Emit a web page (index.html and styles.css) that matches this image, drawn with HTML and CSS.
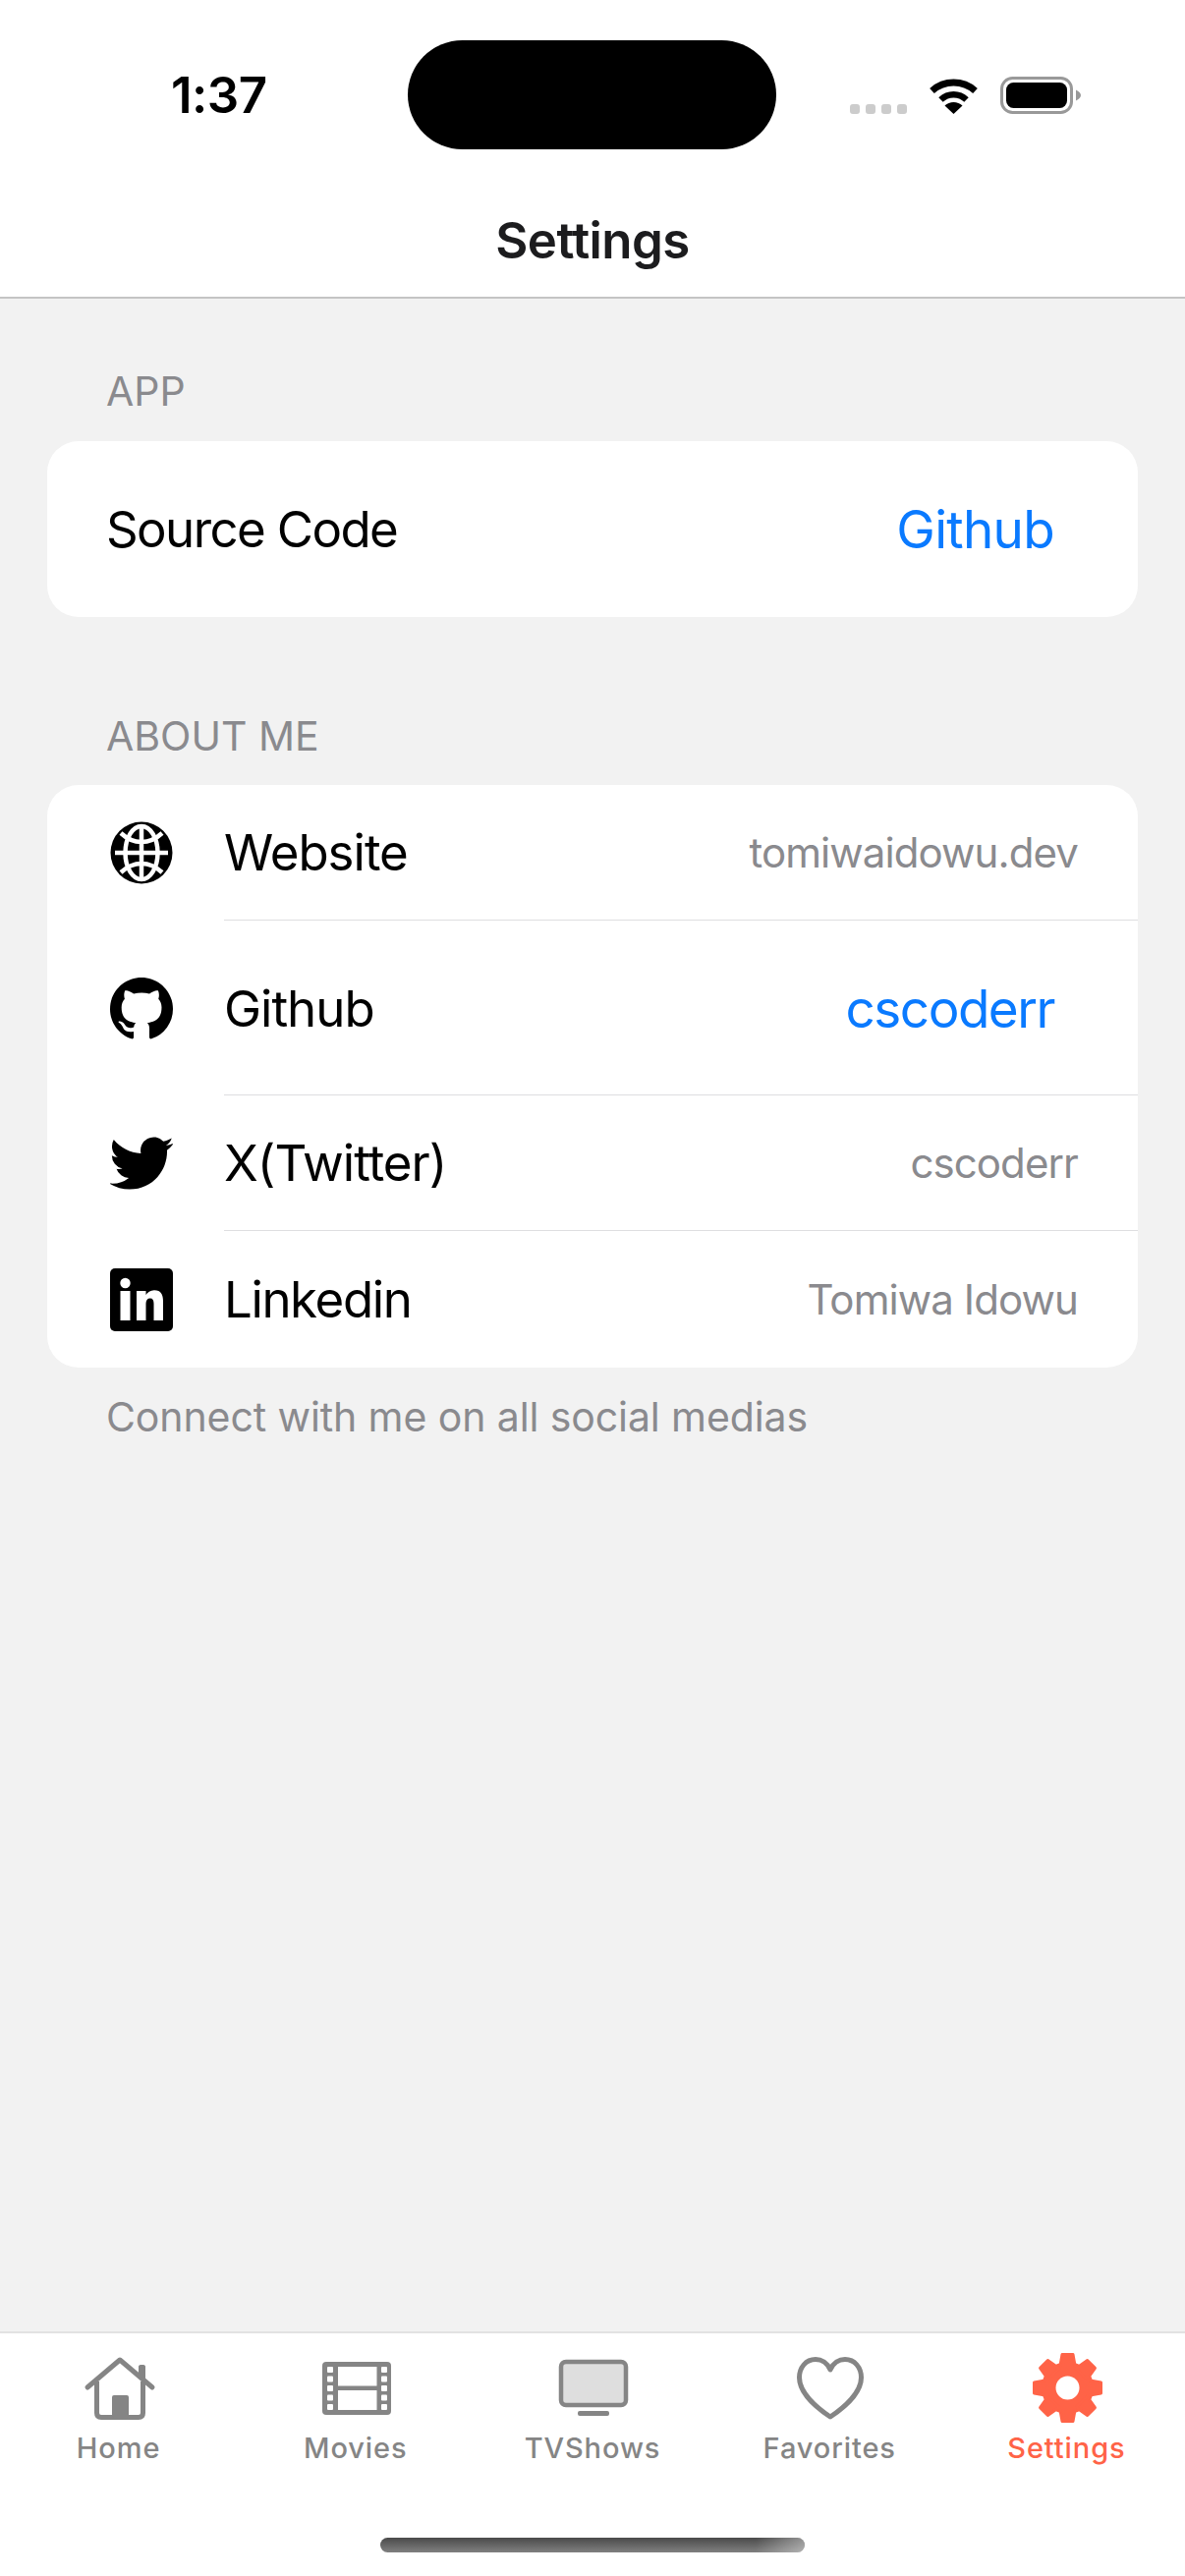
FILE: index.html
```html
<!DOCTYPE html>
<html lang="en">
<head>
    <meta charset="UTF-8">
    <meta name="viewport" content="width=device-width, initial-scale=1.0">
    <title>Settings</title>
    <link rel="stylesheet" href="styles.css">
</head>
<body>
    <header class="header">
        <div class="status-bar">
            <span class="time">1:37</span>
            <div class="island"></div>
            <div class="status-icons">
                <div class="signal"><i></i><i></i><i></i><i></i></div>
                <svg class="wifi" viewBox="0 0 51 37">
                    <path d="M3.5 13.5A33 33 0 0 1 47.5 13.5" fill="none" stroke="#000" stroke-width="7"/>
                    <path d="M12.5 22.5A19 19 0 0 1 38.5 22.5" fill="none" stroke="#000" stroke-width="6.5"/>
                    <path d="M25.5 37L16.5 28.5A13 13 0 0 1 34.5 28.5Z" fill="#000"/>
                </svg>
                <svg class="battery" viewBox="0 0 82 38">
                    <rect x="1.500" y="1.500" width="71" height="35" rx="11" fill="none" stroke="#999" stroke-width="3"/>
                    <rect x="6" y="6" width="62" height="26" rx="7.500" fill="#000"/>
                    <path d="M77 13.500C80 15 82 17 82 19S80 23 77 24.500Z" fill="#999"/>
                </svg>
            </div>
        </div>
        <h1 class="title">Settings</h1>
    </header>

    <main class="content">
        <h2 class="section-label">APP</h2>
        <section class="card card-app">
            <span class="row-name">Source Code</span>
            <a class="link" href="#">Github</a>
        </section>

        <h2 class="section-label label-about">ABOUT ME</h2>
        <section class="card">
            <div class="row">
                <svg class="row-icon" viewBox="0 0 64 64">
                    <circle cx="32" cy="32" r="31.500" fill="#000"/>
                    <g fill="none" stroke="#fff" stroke-width="4.500">
                        <path d="M5 32H59M32 5V59"/>
                        <ellipse cx="32" cy="32" rx="16.500" ry="27"/>
                        <path d="M11 12C24 24 40 24 53 12M11 52C24 40 40 40 53 52"/>
                    </g>
                </svg>
                <div class="row-body">
                    <span class="row-name">Website</span>
                    <span class="value">tomiwaidowu.dev</span>
                </div>
            </div>
            <div class="row row-tall">
                <svg class="row-icon" viewBox="0 0 16 16">
                    <path d="M8 0C3.58 0 0 3.58 0 8c0 3.54 2.29 6.53 5.47 7.59.4.07.55-.17.55-.38 0-.19-.01-.82-.01-1.49-2.01.37-2.53-.49-2.69-.94-.09-.23-.48-.94-.82-1.13-.28-.15-.68-.52-.01-.53.63-.01 1.08.58 1.23.82.72 1.21 1.87.87 2.33.66.07-.52.28-.87.51-1.07-1.78-.2-3.64-.89-3.64-3.95 0-.87.31-1.59.82-2.15-.08-.2-.36-1.02.08-2.12 0 0 .67-.21 2.2.82.64-.18 1.32-.27 2-.27.68 0 1.36.09 2 .27 1.53-1.04 2.2-.82 2.2-.82.44 1.1.16 1.92.08 2.12.51.56.82 1.27.82 2.15 0 3.07-1.87 3.75-3.65 3.95.29.25.54.73.54 1.48 0 1.07-.01 1.93-.01 2.2 0 .21.15.46.55.38A8.013 8.013 0 0016 8c0-4.42-3.58-8-8-8z" fill="#000"/>
                </svg>
                <div class="row-body">
                    <span class="row-name">Github</span>
                    <a class="link" href="#">cscoderr</a>
                </div>
            </div>
            <div class="row">
                <svg class="row-icon" viewBox="0.25 0.25 23.5 23.5">
                    <path d="M23.953 4.57a10 10 0 01-2.825.775 4.958 4.958 0 002.163-2.723c-.951.555-2.005.959-3.127 1.184a4.92 4.92 0 00-8.384 4.482C7.69 8.095 4.067 6.13 1.64 3.162a4.822 4.822 0 00-.666 2.475c0 1.71.87 3.213 2.188 4.096a4.904 4.904 0 01-2.228-.616v.06a4.923 4.923 0 003.946 4.827 4.996 4.996 0 01-2.212.085 4.936 4.936 0 004.604 3.417 9.867 9.867 0 01-6.102 2.105c-.39 0-.779-.023-1.17-.067a13.995 13.995 0 007.557 2.209c9.053 0 13.998-7.496 13.998-13.985 0-.21 0-.42-.015-.63A9.935 9.935 0 0024 4.59z" fill="#000"/>
                </svg>
                <div class="row-body">
                    <span class="row-name">X(Twitter)</span>
                    <span class="value">cscoderr</span>
                </div>
            </div>
            <div class="row row-last">
                <svg class="row-icon" viewBox="0 0 64 64">
                    <rect width="64" height="64" rx="5" fill="#000"/>
                    <circle cx="15.500" cy="15" r="5.200" fill="#fff"/>
                    <rect x="10.500" y="23" width="10" height="30" fill="#fff"/>
                    <path d="M27 23H36.500V27C38 24.500 41 22.300 45 22.300C52 22.300 54 27 54 33.500V53H44.500V36C44.500 32.500 43.500 30.500 40.800 30.500C38 30.500 36.500 32.500 36.500 36V53H27Z" fill="#fff"/>
                </svg>
                <div class="row-body">
                    <span class="row-name">Linkedin</span>
                    <span class="value">Tomiwa Idowu</span>
                </div>
            </div>
        </section>
        <p class="section-note">Connect with me on all social medias</p>
    </main>

    <footer class="tab-bar">
        <nav class="tabs">
            <a class="tab" href="#">
                <svg class="tab-icon" viewBox="0 0 80 74">
                    <path d="M8 37L41 9L74 37" fill="none" stroke="#858585" stroke-width="5" stroke-linecap="round" stroke-linejoin="round"/>
                    <path d="M17.500 31V63C17.500 66 19 67.500 22 67.500H60C63 67.500 64.500 66 64.500 63V31" fill="none" stroke="#858585" stroke-width="5"/>
                    <path d="M60 26V16C60 14.500 61 14 63.500 14S67 14.500 67 16V32Z" fill="#858585"/>
                    <rect x="33" y="45" width="17" height="23" rx="2" fill="#858585"/>
                </svg>
                <span>Home</span>
            </a>
            <a class="tab" href="#">
                <svg class="tab-icon" viewBox="0 0 80 74">
                    <rect x="6" y="11" width="70" height="54" rx="4" fill="#858585"/>
                    <g fill="#fff">
                        <rect x="22" y="16" width="39.500" height="19.500"/>
                        <rect x="22" y="40" width="39.500" height="20"/>
                        <rect x="11" y="16" width="6" height="6" rx="1"/>
                        <rect x="11" y="25.500" width="6" height="6" rx="1"/>
                        <rect x="11" y="35" width="6" height="6" rx="1"/>
                        <rect x="11" y="44.500" width="6" height="6" rx="1"/>
                        <rect x="11" y="54" width="6" height="6" rx="1"/>
                        <rect x="66" y="16" width="6" height="6" rx="1"/>
                        <rect x="66" y="25.500" width="6" height="6" rx="1"/>
                        <rect x="66" y="35" width="6" height="6" rx="1"/>
                        <rect x="66" y="44.500" width="6" height="6" rx="1"/>
                        <rect x="66" y="54" width="6" height="6" rx="1"/>
                    </g>
                </svg>
                <span>Movies</span>
            </a>
            <a class="tab" href="#">
                <svg class="tab-icon" viewBox="0 0 80 74">
                    <rect x="8" y="11" width="66" height="44" rx="5" fill="#dedede" stroke="#858585" stroke-width="4.500"/>
                    <rect x="25" y="61" width="32" height="5" rx="2" fill="#858585"/>
                </svg>
                <span>TVShows</span>
            </a>
            <a class="tab" href="#">
                <svg class="tab-icon" viewBox="0 0 80 74">
                    <path d="M41 19C38 12 32 8.500 26 8.500C16 8.500 9.500 17 9.500 27C9.500 42 26 57 41 67C56 57 72.500 42 72.500 27C72.500 17 66 8.500 56 8.500C50 8.500 44 12 41 19Z" fill="none" stroke="#858585" stroke-width="5" stroke-linejoin="round"/>
                </svg>
                <span>Favorites</span>
            </a>
            <a class="tab tab-active" href="#">
                <svg class="tab-icon" viewBox="0 0 80 74">
                    <g transform="translate(41.500 37.500)" fill="#ff6347" stroke="#ff6347" stroke-width="3" stroke-linejoin="round">
                        <circle r="25"/>
                        <path id="tooth" d="M-5.500 -34H5.500L8 -20H-8Z"/>
                        <use href="#tooth" transform="rotate(45)"/>
                        <use href="#tooth" transform="rotate(90)"/>
                        <use href="#tooth" transform="rotate(135)"/>
                        <use href="#tooth" transform="rotate(180)"/>
                        <use href="#tooth" transform="rotate(225)"/>
                        <use href="#tooth" transform="rotate(270)"/>
                        <use href="#tooth" transform="rotate(315)"/>
                        <circle r="12" fill="#fff" stroke="none"/>
                    </g>
                </svg>
                <span>Settings</span>
            </a>
        </nav>
        <div class="home-indicator"></div>
    </footer>
</body>
</html>
```

FILE: styles.css
```css
* {
    box-sizing: border-box;
}

body {
    font-family: Inter, "Liberation Sans", sans-serif;
    background-color: #f2f2f2;
    display: flex;
    flex-direction: column;
    height: 2622px;
    margin: 0;
    color: #000;
}

a {
    text-decoration: none;
}

.header {
    height: 304px;
    padding-top: 41px;
    background-color: #fff;
    border-bottom: 2px solid #c4c4c4;
}

.status-bar {
    display: flex;
    align-items: center;
    height: 111px;
    padding-left: 174px;
}

.time {
    width: 241px;
    font-size: 51px;
    font-weight: 600;
    letter-spacing: -0.5px;
}

.island {
    width: 375px;
    height: 111px;
    background-color: #000;
    border-radius: 56px;
}

.status-icons {
    display: flex;
    align-items: flex-end;
    gap: 22px;
    margin-left: 75px;
}

.signal {
    display: flex;
    gap: 6px;
}

.signal i {
    width: 10px;
    height: 10px;
    background-color: #ccc;
    border-radius: 3px;
}

.wifi {
    width: 51px;
    height: 37px;
}

.battery {
    width: 82px;
    height: 38px;
}

.title {
    margin: 0;
    padding-top: 62px;
    font-size: 51px;
    line-height: 62px;
    font-weight: 600;
    letter-spacing: -0.6px;
    text-align: center;
    color: #1c1c1e;
}

.content {
    flex: 1;
    padding: 0 48px;
}

.section-label {
    margin: 0;
    padding: 69px 0 26px 60px;
    font-size: 41px;
    line-height: 50px;
    font-weight: 400;
    color: #8a8a8e;
}

.label-about {
    padding: 96px 0 25px 60px;
}

.card {
    background-color: #fff;
    border-radius: 32px;
    overflow: hidden;
}

.card-app {
    display: flex;
    align-items: center;
    justify-content: space-between;
    height: 179px;
    padding: 0 85px 0 60px;
}

.card-app .row-name {
    letter-spacing: -1.6px;
}

.card-app .link {
    letter-spacing: -0.7px;
}

.row {
    display: flex;
    align-items: stretch;
    height: 138px;
    padding-left: 64px;
}

.row-tall {
    height: 178px;
    padding-top: 2px;
}

.row-last {
    height: 139px;
}

.row-icon {
    align-self: center;
    flex: none;
    width: 64px;
    height: 64px;
    margin-right: 52px;
}

.row-body {
    display: flex;
    flex: 1;
    align-items: center;
    justify-content: space-between;
    padding-right: 61px;
    border-bottom: 1px solid #dedee0;
}

.row-tall .row-body {
    padding-right: 85px;
}

.row-tall .link {
    letter-spacing: -1.5px;
}

.row-last .row-body {
    border-bottom: 0;
}

.row-last .row-name {
    letter-spacing: -1.4px;
}

.row-name {
    font-size: 51px;
    letter-spacing: -1px;
}

.link {
    font-size: 53px;
    letter-spacing: -0.9px;
    color: #0a7aff;
}

.value {
    font-size: 42px;
    letter-spacing: -0.9px;
    color: #8a8a8e;
}

.section-note {
    margin: 0;
    padding: 25px 0 0 60px;
    font-size: 41px;
    line-height: 50px;
    letter-spacing: -0.1px;
    color: #8a8a8e;
}

.tab-bar {
    height: 249px;
    background-color: #fff;
    border-top: 2px solid #e2e2e2;
}

.tabs {
    display: flex;
    padding-top: 18px;
}

.tab {
    display: flex;
    flex: 1;
    flex-direction: column;
    align-items: center;
    font-size: 29px;
    line-height: 38px;
    font-weight: 450;
    letter-spacing: 0.9px;
    color: #858585;
}

.tab-active {
    color: #ff6347;
}

.tab-icon {
    width: 80px;
    height: 74px;
    margin-bottom: 6px;
}

.home-indicator {
    position: relative;
    width: 432px;
    height: 15px;
    margin: 72px auto 0;
    border-radius: 8px;
    background: linear-gradient(#4a4a4a, #808080);
}

/* lighter tail on the right end of the bar */
.home-indicator::after {
    content: "";
    position: absolute;
    top: 0;
    right: 0;
    width: 50px;
    height: 15px;
    border-radius: 0 8px 8px 0;
    background: linear-gradient(to right, rgba(255, 255, 255, 0), rgba(255, 255, 255, 0.4));
}
```
